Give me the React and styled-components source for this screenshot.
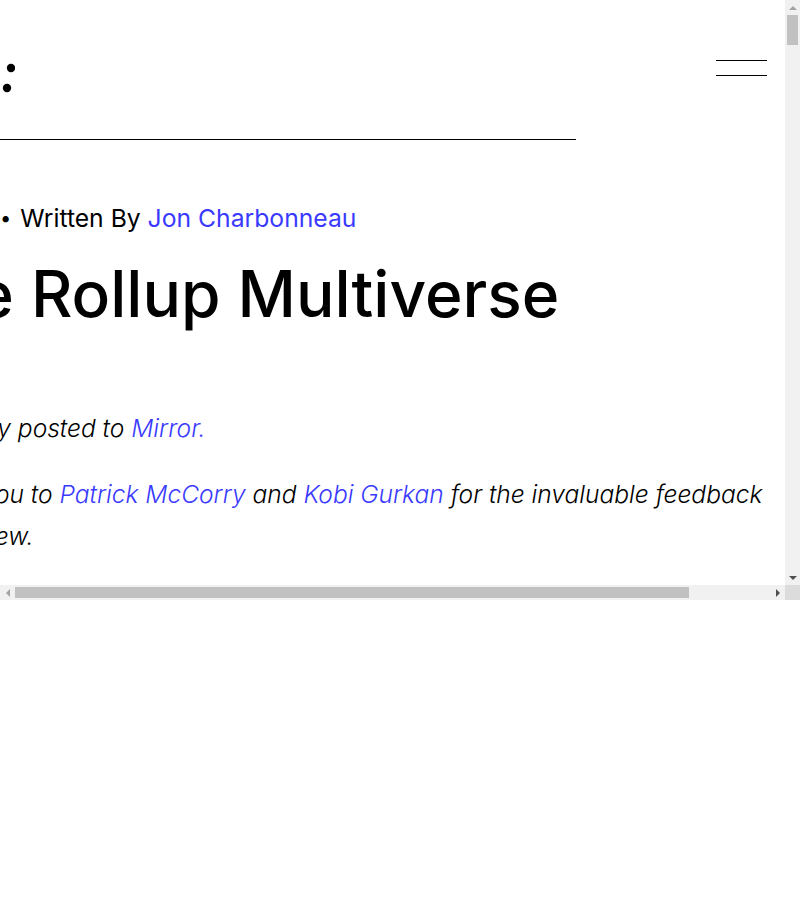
import React from "react";
import styled, { createGlobalStyle } from "styled-components";

const GlobalStyle = createGlobalStyle`
  html, body {
    margin: 0;
    padding: 0;
    background: #fff;
  }
  body {
    font-family: Inter, "Noto Sans", sans-serif;
    color: #000;
  }
`;

// browser-like frame: content pane plus classic scrollbars
const Frame = styled.div`
  display: grid;
  grid-template-columns: 785px 15px;
  grid-template-rows: 585px 15px;
  width: 800px;
  height: 600px;
  background: #fff;
`;

const Pane = styled.div`
  overflow: hidden;
`;

const VBar = styled.div`
  display: flex;
  flex-direction: column;
  background: #f1f1f1;
`;

const HBar = styled.div`
  display: flex;
  background: #f1f1f1;
`;

const Corner = styled.div`
  background: #dcdcdc;
`;

const ArrowBtn = styled.div`
  flex: none;
  display: flex;
  align-items: center;
  justify-content: center;
  width: 15px;
  height: 15px;
`;

const arrowShapes = {
  up: (c) => `border-left: 4px solid transparent; border-right: 4px solid transparent; border-bottom: 4px solid ${c};`,
  down: (c) => `border-left: 4px solid transparent; border-right: 4px solid transparent; border-top: 4px solid ${c};`,
  left: (c) => `border-top: 4px solid transparent; border-bottom: 4px solid transparent; border-right: 4px solid ${c};`,
  right: (c) => `border-top: 4px solid transparent; border-bottom: 4px solid transparent; border-left: 4px solid ${c};`,
};

const Arrow = styled.span`
  width: 0;
  height: 0;
  ${(p) => arrowShapes[p.$dir](p.$off ? "#a3a3a3" : "#505050")}
`;

const Track = styled.div`
  flex: 1;
  display: flex;
  flex-direction: ${(p) => (p.$vertical ? "column" : "row")};
  padding: ${(p) => (p.$vertical ? "0 2px" : "2px 0")};
`;

const Thumb = styled.div`
  flex: none;
  background: #c1c1c1;
  ${(p) => (p.$vertical ? `height: ${p.$size}px;` : `width: ${p.$size}px;`)}
`;

const Page = styled.div`
  width: 969px;
  margin-left: -90px;
`;

const Header = styled.header`
  display: flex;
  justify-content: space-between;
  align-items: flex-start;
  padding: 58px 112px 0 0;
`;

const Logo = styled.svg`
  display: block;
  width: 105px;
  height: 42px;
`;

const Burger = styled.button`
  display: flex;
  flex-direction: column;
  gap: 14px;
  width: 51px;
  margin-top: 2px;
  padding: 0;
  border: 0;
  background: none;
  cursor: pointer;
  span {
    display: block;
    height: 1px;
    background: #000;
  }
`;

const Divider = styled.hr`
  width: 666px;
  height: 1px;
  margin: 39px 0 0;
  border: 0;
  background: #000;
`;

const Meta = styled.div`
  display: flex;
  align-items: center;
  gap: 9px;
  margin-top: 60px;
  padding-left: 90px;
  font-size: 24.7px;
  line-height: 36px;
`;

const Bullet = styled.span`
  font-size: 20px;
`;

const Link = styled.a`
  color: #3a3aff;
  text-decoration: none;
`;

const Title = styled.h1`
  margin: 20px 0 0 ${(p) => p.$shift}px;
  font-size: 64px;
  font-weight: 500;
  line-height: 76px;
  white-space: nowrap;
`;

const Para = styled.p`
  margin: ${(p) => p.$gap}px 0 0 ${(p) => p.$shift}px;
  font-size: 24.55px;
  font-weight: 300;
  font-style: italic;
  line-height: 42px;
  white-space: nowrap;
`;

export default function App() {
  return (
    <>
      <GlobalStyle />
      <Frame>
        <Pane>
          <Page>
            <Header>
              <Logo viewBox="0 0 105 42">
                <circle cx="101" cy="10" r="4.2" fill="#000" />
                <circle cx="97" cy="30" r="4.2" fill="#000" />
              </Logo>
              <Burger aria-label="Menu">
                <span />
                <span />
              </Burger>
            </Header>
            <Divider />
            <Meta>
              <Bullet>•</Bullet>
              <span>
                Written By <Link href="#">Jon Charbonneau</Link>
              </span>
            </Meta>
            <article>
              <Title $shift={-14}>The Rollup Multiverse</Title>
              <Para $gap={75} $shift={-7.5}>
                Originally posted to <Link href="#">Mirror.</Link>
              </Para>
              <Para $gap={24} $shift={-7.5}>
                Thank you to <Link href="#">Patrick McCorry</Link> and{" "}
                <Link href="#">Kobi Gurkan</Link> for the invaluable feedback
                <br />
                and review.
              </Para>
            </article>
          </Page>
        </Pane>
        <VBar>
          <ArrowBtn>
            <Arrow $dir="up" $off />
          </ArrowBtn>
          <Track $vertical>
            <Thumb $vertical $size={30} />
          </Track>
          <ArrowBtn>
            <Arrow $dir="down" />
          </ArrowBtn>
        </VBar>
        <HBar>
          <ArrowBtn>
            <Arrow $dir="left" $off />
          </ArrowBtn>
          <Track>
            <Thumb $size={674} />
          </Track>
          <ArrowBtn>
            <Arrow $dir="right" />
          </ArrowBtn>
        </HBar>
        <Corner />
      </Frame>
    </>
  );
}
